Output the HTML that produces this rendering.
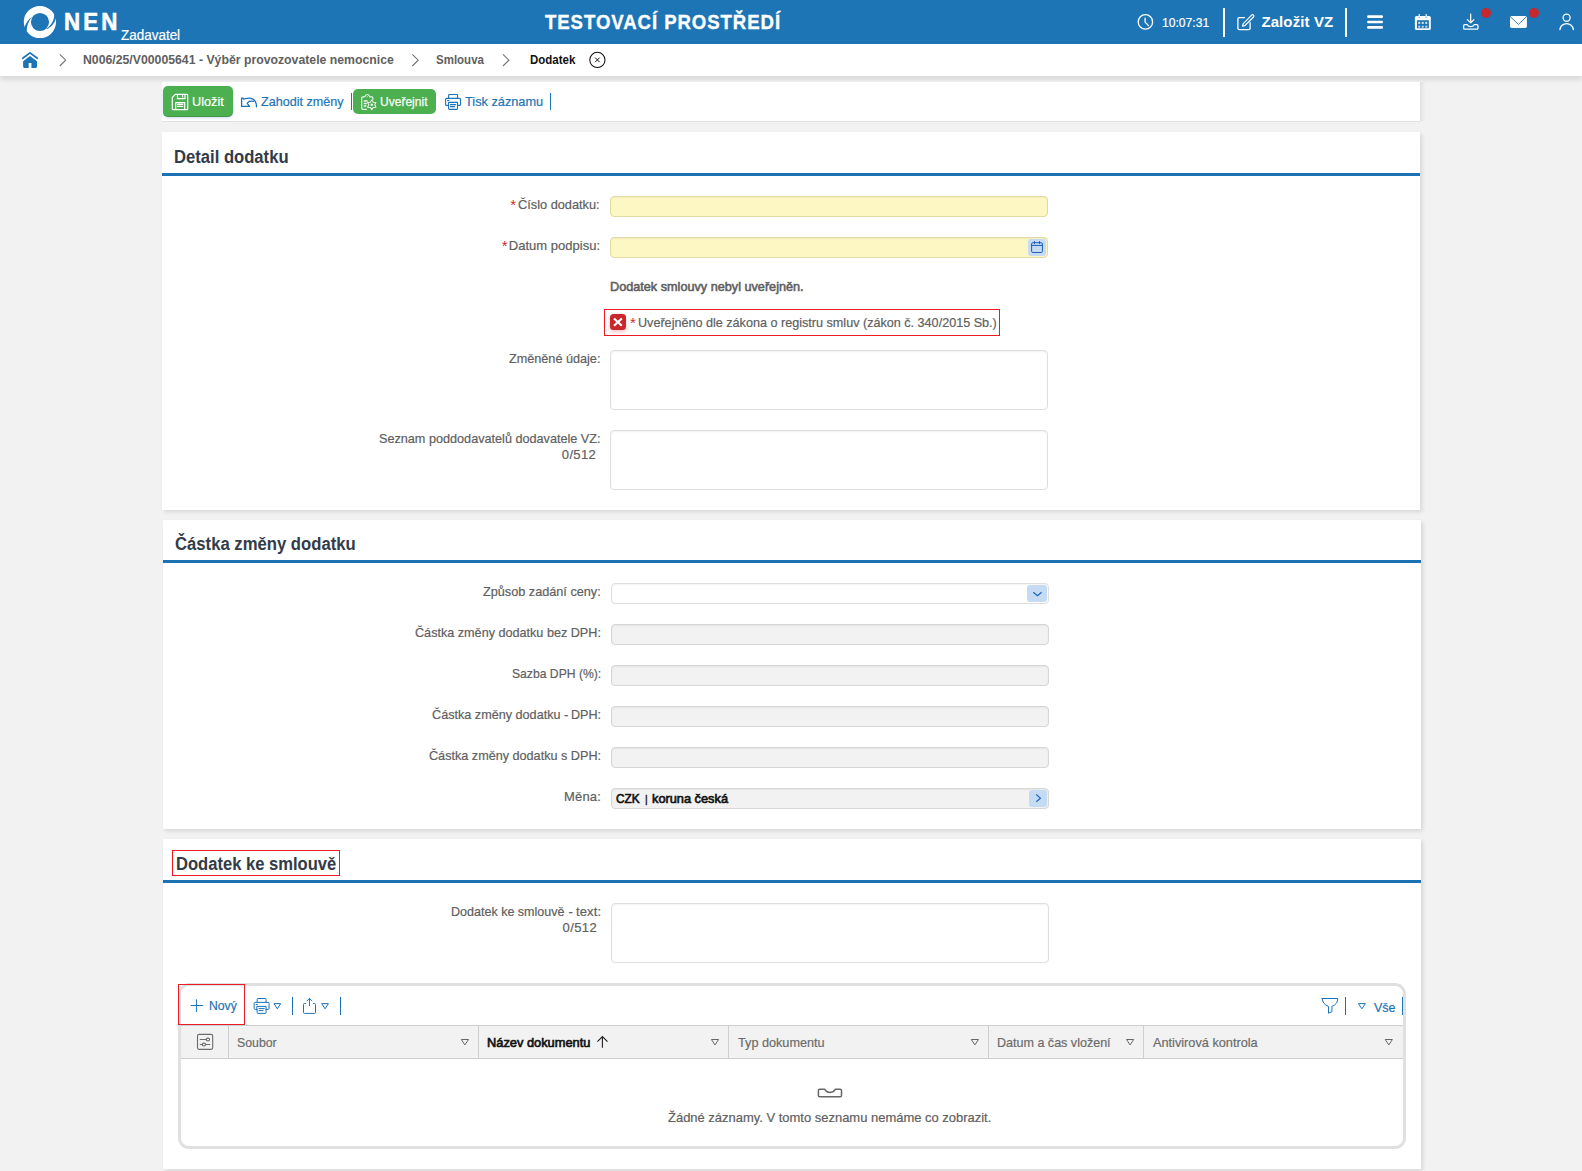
<!DOCTYPE html>
<html lang="cs">
<head>
<meta charset="utf-8">
<title>NEN - Dodatek</title>
<style>
html,body{margin:0;padding:0;}
body{width:1582px;height:1171px;overflow:hidden;background:#f2f2f2;position:relative;
 font-family:"Liberation Sans",sans-serif;font-size:13px;color:#5b5b5b;}
.a{position:absolute;box-sizing:border-box;}
.t{position:absolute;white-space:nowrap;margin:0;padding:0;transform-origin:0 50%;}
svg{position:absolute;overflow:visible;}
#hdr{left:0;top:0;width:1582px;height:44px;background:#1e75b5;}
#bc{left:0;top:44px;width:1582px;height:32px;background:#fff;box-shadow:0 3px 6px rgba(0,0,0,.125);}
.panel{background:#fff;box-shadow:2px 2px 4px rgba(0,0,0,.115);}
.line{height:3px;background:#1a72b3;}
.in{border:1px solid #dedede;border-radius:4px;background:#fff;box-shadow:inset 0 1px 2px rgba(0,0,0,.055);}
.in.req{background:#fdf8c3;border-color:#e0daa6;}
.in.dis{background:#f2f2f2;border-color:#d6d6d6;}
.btn{background:#4caf50;border-radius:6px;}
.ib{background:#c5daf3;border-radius:3px;}
.redbox{border:1px solid #ec1c24;}
.sep{width:1px;background:#1d74b4;}
.hsep{width:2px;background:#fff;}
.th{background:#f2f2f2;border-top:1px solid #cfcfcf;border-bottom:1px solid #cfcfcf;}
.cd{width:1px;background:#cfcfcf;}
.dot{width:10px;height:10px;border-radius:50%;background:#c8282d;}
</style>
</head>
<body>
<!-- header -->
<div class="a" id="hdr"></div>
<div class="a" id="bc"></div>
<div class="a hsep" style="left:1223px;top:8px;height:29px"></div>
<div class="a hsep" style="left:1345px;top:8px;height:29px"></div>
<div class="a dot" style="left:1481px;top:8px"></div>
<div class="a dot" style="left:1529px;top:8px"></div>

<!-- toolbar -->
<div class="a" style="left:1420px;top:82px;width:6px;height:39px;background:linear-gradient(to right,rgba(0,0,0,.075),rgba(0,0,0,.03) 45%,rgba(0,0,0,0))"></div>
<div class="a" style="left:162px;top:82px;width:1258px;height:39px;background:#fff;box-shadow:0 1px 0 #e1e1e1"></div>
<div class="a btn" style="left:163px;top:86px;width:70px;height:31px;border-radius:5px;box-shadow:0 1px 3px rgba(70,120,220,.28),inset 0 -1px 0 rgba(0,0,0,.12)"></div>
<div class="a sep" style="left:351px;top:93px;height:17px"></div>
<div class="a btn" style="left:353px;top:88.6px;width:83px;height:25.6px;border-radius:5px"></div>
<div class="a sep" style="left:550px;top:93px;height:17px"></div>

<!-- panel 1 -->
<div class="a panel" style="left:162px;top:132px;width:1258px;height:378px"></div>
<div class="a line" style="left:162px;top:173px;width:1258px"></div>
<div class="a in req" style="left:610px;top:196px;width:438px;height:21px"></div>
<div class="a in req" style="left:610px;top:237px;width:438px;height:21px"></div>
<div class="a ib" style="left:1028px;top:239px;width:18px;height:17px"></div>
<div class="a redbox" style="left:604px;top:309px;width:396px;height:27px"></div>
<div class="a" style="left:610px;top:314px;width:16px;height:16px;border-radius:3.5px;background:#c9272b;box-shadow:0 2px 4px rgba(200,40,40,.28)"></div>
<div class="a in" style="left:610px;top:350px;width:438px;height:60px"></div>
<div class="a in" style="left:610px;top:430px;width:438px;height:60px"></div>

<!-- panel 2 -->
<div class="a panel" style="left:163px;top:520px;width:1258px;height:309px"></div>
<div class="a line" style="left:163px;top:560px;width:1258px"></div>
<div class="a in" style="left:611px;top:583px;width:438px;height:21px"></div>
<div class="a ib" style="left:1027px;top:585px;width:20px;height:17px"></div>
<div class="a in dis" style="left:611px;top:624px;width:438px;height:21px"></div>
<div class="a in dis" style="left:611px;top:665px;width:438px;height:21px"></div>
<div class="a in dis" style="left:611px;top:706px;width:438px;height:21px"></div>
<div class="a in dis" style="left:611px;top:747px;width:438px;height:21px"></div>
<div class="a in dis" style="left:611px;top:788px;width:438px;height:21px"></div>
<div class="a ib" style="left:1029px;top:790px;width:18px;height:17px"></div>

<!-- panel 3 -->
<div class="a panel" style="left:163px;top:839px;width:1258px;height:330px"></div>
<div class="a line" style="left:163px;top:880px;width:1258px"></div>
<div class="a redbox" style="left:172px;top:850px;width:168px;height:26px"></div>
<div class="a in" style="left:611px;top:903px;width:438px;height:60px"></div>
<div class="a" style="left:178px;top:983px;width:1228px;height:166px;border:3px solid #e0e0e0;border-radius:11px;background:#fff"></div>
<div class="a th" style="left:181px;top:1025px;width:1221.5px;height:34px"></div>
<div class="a cd" style="left:228px;top:1026px;height:32px"></div>
<div class="a cd" style="left:478px;top:1026px;height:32px"></div>
<div class="a cd" style="left:728px;top:1026px;height:32px"></div>
<div class="a cd" style="left:988px;top:1026px;height:32px"></div>
<div class="a cd" style="left:1143px;top:1026px;height:32px"></div>
<div class="a redbox" style="left:178px;top:984px;width:67px;height:41px"></div>
<div class="a sep" style="left:292px;top:997px;height:18px"></div>
<div class="a sep" style="left:340px;top:997px;height:18px"></div>
<div class="a sep" style="left:1345px;top:997px;height:18px"></div>
<div class="a sep" style="left:1402px;top:997px;height:18px"></div>

<svg class="ic" width="1582" height="1171" viewBox="0 0 1582 1171" style="left:0;top:0" fill="none" stroke-linecap="round" stroke-linejoin="round">
<!-- logo -->
<path fill="#fff" fill-rule="evenodd" stroke="none" d="M23.8 22A16.1 16.1 0 1 0 56 22A16.1 16.1 0 1 0 23.8 22ZM30.9 22A9.08 9.08 0 1 0 49.06 22A9.08 9.08 0 1 0 30.9 22Z"/>
<g fill="#1e75b5" stroke="none">
<path d="M54.16 14.5C54.5 19.5 51.5 25.4 46.4 28.5L47.4 29.05C52.3 26.3 55.2 22.2 55.75 18.6L57.2 17.5L55.2 13.2Z"/>
<path d="M32.2 16.45C29 18.6 26 22.8 24.4 27.3L22.8 28.3L25.3 32.6L26.7 31.1C26.6 26.5 28.3 21.5 31.65 17.3Z"/>
</g>
<!-- header: clock -->
<g stroke="#fff" stroke-width="1.3">
<circle cx="1145.4" cy="21.9" r="7.2"/>
<path d="M1145.1 18.2V22.1L1148.5 25.6"/>
<!-- edit -->
<path d="M1244.5 17.6H1239.3Q1237.9 17.6 1237.9 19V28.2Q1237.9 29.6 1239.3 29.6H1248.7Q1250.1 29.6 1250.1 28.2V22.6"/>
<path d="M1243.1 23.9L1251.6 15.1Q1252.6 14.3 1253.5 15.2Q1254.3 16.1 1253.5 17L1244.9 25.7L1242.6 26.2Z" stroke-width="1.2"/>
<!-- download -->
<path d="M1470.65 14.2V22.7M1467.4 19.6L1470.65 22.9L1473.9 19.6"/>
<path d="M1464.8 24.7H1467.3Q1468.2 26.6 1470.7 26.6Q1473.2 26.6 1474.1 24.7H1476.7Q1478 24.7 1478 26V27.9Q1478 29.2 1476.7 29.2H1464.8Q1463.6 29.2 1463.6 27.9V26Q1463.6 24.7 1464.8 24.7Z"/>
<!-- user -->
<circle cx="1566.6" cy="17.7" r="3.5"/>
<path d="M1559.9 29.6A6.8 6.8 0 0 1 1573.4 29.6"/>
</g>
<!-- hamburger -->
<g fill="#fff" stroke="none">
<rect x="1367.1" y="15.3" width="15.9" height="2.6" rx="1.2"/>
<rect x="1367.1" y="20.8" width="15.9" height="2.4" rx="1.2"/>
<rect x="1367.1" y="26.1" width="15.9" height="2.6" rx="1.2"/>
<!-- calendar -->
<rect x="1414.9" y="15.9" width="15.9" height="14.1" rx="1.6"/>
<rect x="1418.6" y="14" width="1.3" height="3" rx=".5"/>
<rect x="1425.6" y="14" width="1.3" height="3" rx=".5"/>
<rect x="1416.9" y="20.2" width="12" height="8.1" fill="#1e75b5"/>
<rect x="1418.3" y="21.9" width="1.9" height="2" fill="#dbe9f5"/><rect x="1421.8" y="21.9" width="1.9" height="2" fill="#dbe9f5"/><rect x="1425.3" y="21.9" width="1.9" height="2" fill="#dbe9f5"/>
<rect x="1418.3" y="25.7" width="1.9" height="2" fill="#c3d9ee"/><rect x="1421.8" y="25.7" width="1.9" height="2" fill="#c3d9ee"/><rect x="1425.3" y="25.7" width="1.9" height="2" fill="#c3d9ee"/>
<rect x="1418.6" y="16.4" width="1.3" height="1.6" fill="#8fc0e6"/><rect x="1425.6" y="16.4" width="1.3" height="1.6" fill="#8fc0e6"/>
<!-- mail -->
<rect x="1510" y="16" width="16.9" height="11.9" rx="1.7"/>
</g>
<path d="M1510.6 16.9L1518.4 24.4L1526.3 16.9" stroke="#1e75b5" stroke-width=".9"/>
<!-- breadcrumb home -->
<path d="M22.7 58.3L30 52.9L37.3 58.3" stroke="#1d74b4" stroke-width="1.7"/>
<path d="M30 56L37 61.3V66.6Q37 67.9 35.7 67.9H31.4V63H28.7V67.9H24.4Q23.1 67.9 23.1 66.6V61.3Z" fill="#1d74b4"/>
<!-- breadcrumb chevrons -->
<g stroke="#747474" stroke-width="1.1" stroke-linecap="butt" stroke-linejoin="miter">
<path d="M59.8 54.3L65.7 60.2L59.8 66"/>
<path d="M412.3 54.3L418.2 60.2L412.3 66"/>
<path d="M503 54.3L508.9 60.2L503 66"/>
</g>
<!-- close -->
<circle cx="597.4" cy="59.9" r="7.6" stroke="#111" stroke-width="1.05"/>
<path d="M595.1 57.6L599.7 62.2M599.7 57.6L595.1 62.2" stroke="#111" stroke-width="1" stroke-linecap="butt"/>
<!-- save (floppy) -->
<g stroke="#fff" stroke-width="1.2">
<path d="M175.3 94.3H186.8Q187.7 94.3 187.7 95.2V108.8Q187.7 109.7 186.8 109.7H173.2Q172.3 109.7 172.3 108.8V97.3Z"/>
<path d="M177.5 94.5V98.6H185V94.5M182.6 95.6V97"/>
<path d="M175.7 109.5V102.6H184.7V109.5M177.5 104.4H182.8M177.5 106.4H182.8"/>
</g>
<!-- undo -->
<g stroke="#1a73bd" stroke-width="1.3">
<path d="M242.9 98.2H241.6V106.4H249.5L247.3 103.3L249.1 101.4Q251.2 101 253.4 101.3"/>
<path d="M243 98.4Q244 99.9 245.2 98.6Q248 98 250.3 98.2Q256.4 99.4 256.5 106.8"/>
</g>
<!-- publish icon -->
<g stroke="#fff" stroke-width="1.2" opacity=".9">
<path d="M366.4 109.4H362.8Q361.7 109.4 361.7 108.3V98Q361.7 96.9 362.8 96.9H364.7Q365.4 94.5 367.3 94.5Q369.2 94.5 369.9 96.9H371.8Q372.9 96.9 372.9 98V99.3"/>
<path d="M364.3 100.9H367.2M364.3 103.5H366.2M364.3 105.9H365.8" stroke-width="1.5"/>
<path d="M371.80 100.00L373.30 102.20L375.96 102.40L374.80 104.80L375.96 107.20L373.30 107.40L371.80 109.60L370.30 107.40L367.64 107.20L368.80 104.80L367.64 102.40L370.30 102.20Z" stroke-width="1.05"/>
<circle cx="371.8" cy="104.8" r="1.25" fill="#fff" stroke="none"/>
<circle cx="367.3" cy="96.7" r=".55" fill="#fff" stroke="none"/>
</g>
<!-- printer (toolbar) -->
<g id="prn" stroke="#1a73bd" stroke-width="1.1">
<path d="M448.6 98.4V95.3Q448.6 94.5 449.4 94.5H456.7Q457.5 94.5 457.5 95.3V98.4"/>
<path d="M448.6 105.4H446.6Q445.6 105.4 445.6 104.4V99.4Q445.6 98.4 446.6 98.4H459.5Q460.5 98.4 460.5 99.4V104.4Q460.5 105.4 459.5 105.4H457.5"/>
<path d="M448.6 102.4H457.5V108.6Q457.5 109.4 456.7 109.4H449.4Q448.6 109.4 448.6 108.6Z"/>
<path d="M450.4 104.6H455.7M450.4 106.6H454.6M447.5 100.5H448.9"/>
</g>
<!-- date input calendar -->
<g stroke="#1b5db3" stroke-width="1" stroke-linecap="butt">
<rect x="1031.6" y="242.7" width="10.8" height="9.8" rx="1.2"/>
<path d="M1031.6 245.4H1042.4M1034.5 241.2V243.9M1039.5 241.2V243.9"/>
</g>
<!-- checkbox X -->
<path d="M614 318.4L621.8 325.7M621.8 318.4L614 325.7" stroke="#fff" stroke-width="2.1" stroke-linecap="butt"/>
<!-- select chevrons -->
<path d="M1033.3 592.3L1037.45 595.8L1041.6 592.3" stroke="#1b62c4" stroke-width="1.15" stroke-linecap="butt" stroke-linejoin="miter"/>
<path d="M1036.3 794.5L1040.4 798.15L1036.3 801.8" stroke="#1b62c4" stroke-width="1.15" stroke-linecap="butt" stroke-linejoin="miter"/>
<!-- grid toolbar -->
<g stroke="#1a73bd" stroke-width="1">
<path d="M191.1 1005.5H202.8M196.4 999.7V1011.6" stroke-width="1"/>
<g transform="translate(-191.45 904.0)">
<path d="M448.6 98.4V95.3Q448.6 94.5 449.4 94.5H456.7Q457.5 94.5 457.5 95.3V98.4"/>
<path d="M448.6 105.4H446.6Q445.6 105.4 445.6 104.4V99.4Q445.6 98.4 446.6 98.4H459.5Q460.5 98.4 460.5 99.4V104.4Q460.5 105.4 459.5 105.4H457.5"/>
<path d="M448.6 102.4H457.5V108.6Q457.5 109.4 456.7 109.4H449.4Q448.6 109.4 448.6 108.6Z"/>
<path d="M450.4 104.6H455.7M450.4 106.6H454.6M447.5 100.5H448.9"/>
</g>
<path d="M274.4 1003.6H280.7L277.55 1008.5Z"/>
<path d="M305.6 1003.5H304.4Q303.5 1003.5 303.5 1004.4V1012.5Q303.5 1013.4 304.4 1013.4H314.6Q315.5 1013.4 315.5 1012.5V1004.4Q315.5 1003.5 314.6 1003.5H313.4"/>
<path d="M309.45 1005.6V998.5M307.1 1000.8L309.45 998.4L311.9 1000.8"/>
<path d="M322.1 1003.6H328.4L325.25 1008.5Z"/>
<path d="M1322.2 998.5H1337.8Q1337.6 1004.3 1331.9 1006.4V1011.7L1328.5 1013.2V1006.4Q1322.5 1004.3 1322.2 998.5Z"/>
<path d="M1358.8 1003.6H1365.4L1362.1 1008.5Z"/>
</g>
<!-- table header -->
<g stroke="#6b6b6b" stroke-width="1.1">
<rect x="197.5" y="1034.4" width="15.2" height="15" rx="1.6"/>
<path d="M200.2 1039.5H206.3M200.2 1044.5H202.3M205.5 1044.5H209.8"/>
<ellipse cx="207.9" cy="1039.5" rx="1.7" ry="1.4"/>
<ellipse cx="203.9" cy="1044.5" rx="1.7" ry="1.4"/>
</g>
<g stroke="#666" stroke-width="1" stroke-linejoin="miter">
<path d="M461.7 1039.5H468.5L465.1 1044.6Z"/>
<path d="M711.8 1039.5H718.6L715.2 1044.6Z"/>
<path d="M971.7 1039.5H978.5L975.1 1044.6Z"/>
<path d="M1126.9 1039.5H1133.7L1130.3 1044.6Z"/>
<path d="M1385.6 1039.5H1392.4L1389 1044.6Z"/>
</g>
<path d="M602.4 1047.8V1036.6M597.4 1041.7L602.4 1036.5L607.5 1041.7" stroke="#222" stroke-width="1.1" stroke-linecap="butt" stroke-linejoin="miter"/>
<!-- empty -->
<path d="M819.7 1089.2H824.6Q826.2 1092.4 830 1092.4Q833.8 1092.4 835.5 1089.2H840.2Q841.5 1089.2 841.5 1090.5V1095.5Q841.5 1096.8 840.2 1096.8H819.7Q818.4 1096.8 818.4 1095.5V1090.5Q818.4 1089.2 819.7 1089.2Z" stroke="#666" stroke-width="1.5"/>
</svg>

<span class="t" style="left:64.45px;top:6.00px;font-size:24px;line-height:32px;color:#fff;font-weight:700;letter-spacing:3.380px;transform:scaleX(0.9300);-webkit-text-stroke:0.6px #fff;">NEN</span>
<span class="t" style="left:120.90px;top:25.80px;font-size:14px;line-height:18px;color:#fff;transform:scaleX(0.9615);-webkit-text-stroke:0.2px #fff;">Zadavatel</span>
<span class="t" style="left:544.86px;top:9.10px;font-size:20px;line-height:26px;color:#fff;font-weight:700;letter-spacing:0.995px;transform:scaleX(0.9300);-webkit-text-stroke:0.35px #fff;">TESTOVACÍ PROSTŘEDÍ</span>
<span class="t" style="left:1162.39px;top:13.50px;font-size:13px;line-height:18px;color:#fff;transform:scaleX(0.9313);-webkit-text-stroke:0.2px #fff;">10:07:31</span>
<span class="t" style="left:1261.40px;top:12.00px;font-size:15px;line-height:20px;color:#fff;font-weight:700;letter-spacing:0.103px;">Založit VZ</span>
<span class="t" style="left:83.40px;top:50.90px;font-size:13px;line-height:18px;color:#606060;font-weight:700;transform:scaleX(0.9433);">N006/25/V00005641 - Výběr provozovatele nemocnice</span>
<span class="t" style="left:435.80px;top:50.90px;font-size:13px;line-height:18px;color:#606060;font-weight:700;transform:scaleX(0.8844);">Smlouva</span>
<span class="t" style="left:530.00px;top:50.90px;font-size:13px;line-height:18px;color:#111;font-weight:700;transform:scaleX(0.8836);">Dodatek</span>
<span class="t" style="left:191.72px;top:92.90px;font-size:13px;line-height:18px;color:#fff;transform:scaleX(0.9784);-webkit-text-stroke:0.2px #fff;">Uložit</span>
<span class="t" style="left:260.90px;top:92.90px;font-size:13px;line-height:18px;color:#1d74b4;transform:scaleX(0.9667);-webkit-text-stroke:0.2px #1d74b4;">Zahodit změny</span>
<span class="t" style="left:380.12px;top:93.90px;font-size:12px;line-height:16px;color:#fff;-webkit-text-stroke:0.25px #fff;opacity:0.95;">Uveřejnit</span>
<span class="t" style="left:465.20px;top:92.90px;font-size:13px;line-height:18px;color:#1d74b4;transform:scaleX(0.9802);-webkit-text-stroke:0.2px #1d74b4;">Tisk záznamu</span>
<span class="t" style="left:173.78px;top:144.70px;font-size:18px;line-height:24px;color:#323b48;font-weight:700;transform:scaleX(0.9236);">Detail dodatku</span>
<span class="t" style="left:510.30px;top:195.00px;font-size:15px;line-height:20px;color:#cf2b2b;">*</span>
<span class="t" style="left:518.40px;top:195.60px;font-size:13px;line-height:18px;color:#606060;transform:scaleX(0.9820);-webkit-text-stroke:0.2px #606060;">Číslo dodatku:</span>
<span class="t" style="left:501.70px;top:236.00px;font-size:15px;line-height:20px;color:#cf2b2b;">*</span>
<span class="t" style="left:508.80px;top:236.90px;font-size:13px;line-height:18px;color:#606060;letter-spacing:0.012px;-webkit-text-stroke:0.2px #606060;">Datum podpisu:</span>
<span class="t" style="left:609.69px;top:277.90px;font-size:13px;line-height:18px;color:#5e5e5e;transform:scaleX(0.9744);-webkit-text-stroke:0.55px #5e5e5e;">Dodatek smlouvy nebyl uveřejněn.</span>
<span class="t" style="left:630.00px;top:313.00px;font-size:15px;line-height:20px;color:#cf2b2b;">*</span>
<span class="t" style="left:637.53px;top:313.70px;font-size:13px;line-height:18px;color:#606060;transform:scaleX(0.9698);-webkit-text-stroke:0.2px #606060;">Uveřejněno dle zákona o registru smluv (zákon č. 340/2015 Sb.)</span>
<span class="t" style="left:508.80px;top:350.30px;font-size:13px;line-height:18px;color:#606060;transform:scaleX(0.9728);-webkit-text-stroke:0.2px #606060;">Změněné údaje:</span>
<span class="t" style="left:378.70px;top:430.20px;font-size:13px;line-height:18px;color:#606060;transform:scaleX(0.9730);-webkit-text-stroke:0.2px #606060;">Seznam poddodavatelů dodavatele VZ:</span>
<span class="t" style="left:561.80px;top:445.90px;font-size:13px;line-height:18px;color:#606060;letter-spacing:0.350px;-webkit-text-stroke:0.2px #606060;">0/512</span>
<span class="t" style="left:174.70px;top:531.80px;font-size:18px;line-height:24px;color:#323b48;font-weight:700;transform:scaleX(0.9265);">Částka změny dodatku</span>
<span class="t" style="left:483.20px;top:583.30px;font-size:13px;line-height:18px;color:#606060;transform:scaleX(0.9753);-webkit-text-stroke:0.2px #606060;">Způsob zadání ceny:</span>
<span class="t" style="left:415.00px;top:624.40px;font-size:13px;line-height:18px;color:#606060;transform:scaleX(0.9709);-webkit-text-stroke:0.2px #606060;">Částka změny dodatku bez DPH:</span>
<span class="t" style="left:511.69px;top:665.40px;font-size:13px;line-height:18px;color:#606060;transform:scaleX(0.9352);-webkit-text-stroke:0.2px #606060;">Sazba DPH (%):</span>
<span><span class="t" style="left:432.20px;top:706.30px;font-size:13px;line-height:18px;color:#606060;transform:scaleX(0.9720);-webkit-text-stroke:0.2px #606060;">Částka změny dodatku</span> <span class="t" style="left:564.10px;top:706.30px;font-size:13px;line-height:18px;color:#606060;-webkit-text-stroke:0.2px #606060;">-</span> <span class="t" style="left:570.83px;top:706.30px;font-size:13px;line-height:18px;color:#606060;transform:scaleX(0.9680);-webkit-text-stroke:0.2px #606060;">DPH:</span></span>
<span class="t" style="left:428.90px;top:747.30px;font-size:13px;line-height:18px;color:#606060;transform:scaleX(0.9717);-webkit-text-stroke:0.2px #606060;">Částka změny dodatku s DPH:</span>
<span class="t" style="left:564.00px;top:788.40px;font-size:13px;line-height:18px;color:#606060;letter-spacing:0.195px;-webkit-text-stroke:0.2px #606060;">Měna:</span>
<span><span class="t" style="left:616.30px;top:790.20px;font-size:13px;line-height:18px;color:#111;transform:scaleX(0.9081);-webkit-text-stroke:0.65px #111;">CZK</span> <span class="t" style="left:645.07px;top:792.60px;font-size:10px;line-height:14px;color:#111;-webkit-text-stroke:0.35px #111;">|</span> <span class="t" style="left:651.72px;top:790.20px;font-size:13px;line-height:18px;color:#111;transform:scaleX(0.9830);-webkit-text-stroke:0.65px #111;">koruna česká</span></span>
<span class="t" style="left:175.58px;top:852.00px;font-size:18px;line-height:24px;color:#323b48;font-weight:700;transform:scaleX(0.9205);">Dodatek ke smlouvě</span>
<span><span class="t" style="left:451.13px;top:903.40px;font-size:13px;line-height:18px;color:#606060;transform:scaleX(0.9636);-webkit-text-stroke:0.2px #606060;">Dodatek ke smlouvě</span> <span class="t" style="left:568.60px;top:903.40px;font-size:13px;line-height:18px;color:#606060;-webkit-text-stroke:0.2px #606060;">-</span> <span class="t" style="left:575.90px;top:903.40px;font-size:13px;line-height:18px;color:#606060;letter-spacing:0.137px;-webkit-text-stroke:0.2px #606060;">text:</span></span>
<span class="t" style="left:562.60px;top:919.20px;font-size:13px;line-height:18px;color:#606060;letter-spacing:0.400px;-webkit-text-stroke:0.2px #606060;">0/512</span>
<span class="t" style="left:209.06px;top:997.00px;font-size:13px;line-height:18px;color:#1d74b4;transform:scaleX(0.9380);-webkit-text-stroke:0.2px #1d74b4;">Nový</span>
<span class="t" style="left:1373.80px;top:998.70px;font-size:13px;line-height:18px;color:#1d74b4;transform:scaleX(0.9611);-webkit-text-stroke:0.2px #1d74b4;">Vše</span>
<span class="t" style="left:237.29px;top:1033.90px;font-size:13px;line-height:18px;color:#6c6c6c;transform:scaleX(0.9465);-webkit-text-stroke:0.2px #6c6c6c;">Soubor</span>
<span class="t" style="left:486.83px;top:1033.90px;font-size:13px;line-height:18px;color:#111;transform:scaleX(0.9866);-webkit-text-stroke:0.65px #111;">Název dokumentu</span>
<span class="t" style="left:737.60px;top:1033.90px;font-size:13px;line-height:18px;color:#6c6c6c;transform:scaleX(0.9746);-webkit-text-stroke:0.2px #6c6c6c;">Typ dokumentu</span>
<span class="t" style="left:997.13px;top:1033.90px;font-size:13px;line-height:18px;color:#6c6c6c;transform:scaleX(0.9645);-webkit-text-stroke:0.2px #6c6c6c;">Datum a čas vložení</span>
<span class="t" style="left:1152.50px;top:1033.90px;font-size:13px;line-height:18px;color:#6c6c6c;transform:scaleX(0.9786);-webkit-text-stroke:0.2px #6c6c6c;">Antivirová kontrola</span>
<span class="t" style="left:668.40px;top:1108.70px;font-size:13px;line-height:18px;color:#606060;transform:scaleX(0.9973);-webkit-text-stroke:0.2px #606060;">Žádné záznamy. V tomto seznamu nemáme co zobrazit.</span>
</body>
</html>
